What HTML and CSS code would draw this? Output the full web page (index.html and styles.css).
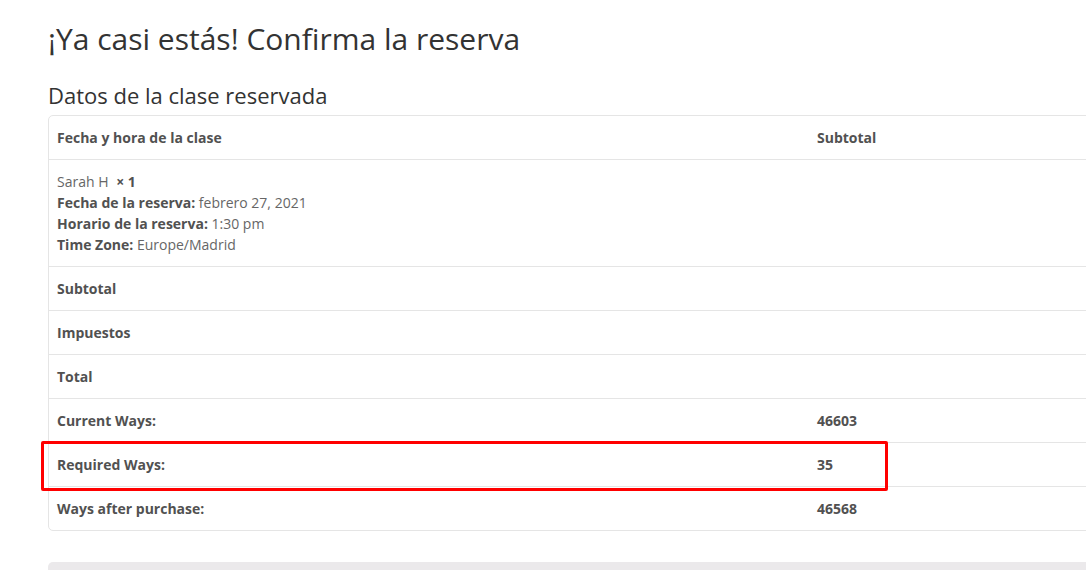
FILE: index.html
```html
<!DOCTYPE html>
<html lang="es">
<head>
  <meta charset="UTF-8">
  <meta name="viewport" content="width=device-width, initial-scale=1.0">
  <title>Confirma la reserva</title>
  <link rel="stylesheet" href="styles.css">
</head>
<body>
  <div class="page">
    <h1>¡Ya casi estás! Confirma la reserva</h1>

    <h3>Datos de la clase reservada</h3>

    <div class="order-wrap">
      <table class="order">
        <thead>
          <tr>
            <th class="col-name">Fecha y hora de la clase</th>
            <th>Subtotal</th>
          </tr>
        </thead>
        <tbody>
          <tr class="item">
            <td>
              <span>Sarah H</span> <strong class="qty">&times; 1</strong><br>
              <strong>Fecha de la reserva:</strong> febrero 27, 2021<br>
              <strong>Horario de la reserva:</strong> 1:30 pm<br>
              <strong>Time Zone:</strong> Europe/Madrid
            </td>
            <td></td>
          </tr>
          <tr><th>Subtotal</th><td></td></tr>
          <tr><th>Impuestos</th><td></td></tr>
          <tr><th>Total</th><td></td></tr>
          <tr><th>Current Ways:</th><td><strong>46603</strong></td></tr>
          <tr><th>Required Ways:</th><td><strong>35</strong></td></tr>
          <tr><th>Ways after purchase:</th><td><strong>46568</strong></td></tr>
        </tbody>
      </table>
      <div class="highlight"></div>
    </div>

    <div class="payment-box"></div>
  </div>
</body>
</html>
```

FILE: styles.css
```css
html, body {
  overflow: hidden;
}
body {
  font-family: "Open Sans", Arial, sans-serif;
  background: #fff;
  color: #515151;
  margin: 0;
  font-size: 14px;
  line-height: 1.5;
}
.page {
  padding: 0 0 0 48px;
  width: 1160px;
}
h1 {
  font-size: 30px;
  font-weight: 400;
  color: #333;
  margin: 0;
  padding-top: 21px;
  line-height: 36px;
}
h3 {
  font-size: 22px;
  font-weight: 400;
  color: #333;
  margin: 25px 0 0;
  line-height: 26px;
}
.order-wrap {
  position: relative;
  margin-top: 7px;
}
.order {
  width: 100%;
  border: 1px solid #e5e5e5;
  border-radius: 5px;
  border-collapse: separate;
  border-spacing: 0;
  margin-bottom: 31px;
}
.order th, .order td {
  text-align: left;
  padding: 11px 8px;
  border-top: 1px solid #e5e5e5;
  font-weight: 400;
  vertical-align: top;
}
.order thead th {
  border-top: none;
  font-weight: 700;
}
.order .col-name {
  width: 744px;
}
.order td strong, .order th {
  font-weight: 700;
}
.order tr.item td {
  padding-top: 11px;
  padding-bottom: 11px;
  color: #666;
}
.order tr.item strong {
  color: #515151;
}
.order .qty {
  margin-left: 4px;
}
.highlight {
  position: absolute;
  left: -7px;
  top: 326px;
  width: 841px;
  height: 44px;
  border: 3px solid #f00;
  border-radius: 2px;
}
.payment-box {
  height: 40px;
  background: #ebe9eb;
  border-radius: 5px 0 0 0;
}
```
